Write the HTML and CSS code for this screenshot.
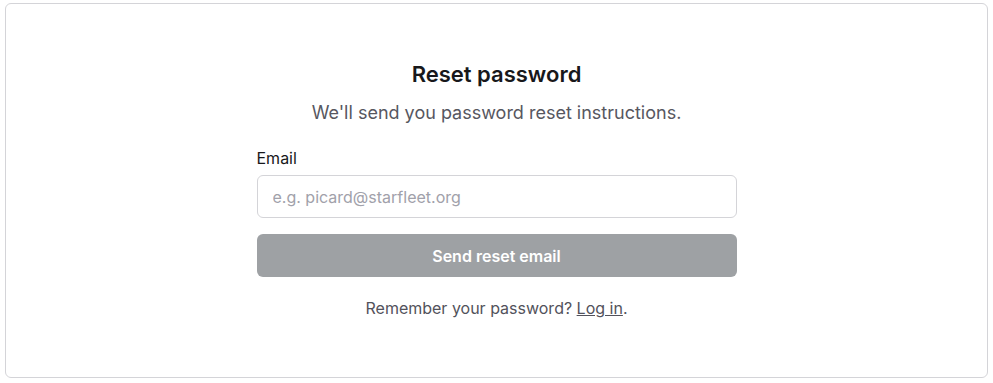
FILE: index.html
```html
<!DOCTYPE html>
<html>
<head>
  <meta charset="utf-8">
  <meta name="viewport" content="width=device-width, initial-scale=1.0">
  <title>Reset password</title>
  <link rel="stylesheet" href="styles.css">
</head>
<body>
  <main class="card">
    <form class="reset-form">
      <h1 class="title">Reset password</h1>
      <p class="subtitle">We'll send you password reset instructions.</p>
      <label class="label" for="email">Email</label>
      <input id="email" class="input" type="email" placeholder="e.g. picard@starfleet.org">
      <button class="button" type="button" disabled>Send reset email</button>
      <p class="footer">Remember your password? <a href="#">Log in</a>.</p>
    </form>
  </main>
</body>
</html>
```

FILE: styles.css
```css
body, html {
  margin: 0;
  padding: 0;
  background: #fff;
  color: #18181b;
  font-family: Inter, "Noto Sans", sans-serif;
}
/* outer bordered box */
.card {
  box-sizing: border-box;
  width: 983px;
  height: 375px;
  margin: 3px 0 0 5px;
  border: 1px solid #d4d4d8;
  border-radius: 6px;
  padding-top: 56px;
  display: flex;
  justify-content: center;
}
.reset-form {
  width: 480px;
  display: flex;
  flex-direction: column;
}
.title {
  margin: 0;
  text-align: center;
  font-size: 22px;
  line-height: 28px;
  font-weight: 600;
  color: #18181b;
}
.subtitle {
  margin: 11px 0 0;
  text-align: center;
  font-size: 18px;
  line-height: 28px;
  color: #57575f;
}
.label {
  margin-top: 19px;
  font-size: 16px;
  line-height: 24px;
  color: #18181b;
}
.input {
  box-sizing: border-box;
  margin-top: 5px;
  height: 43px;
  padding: 0 15px;
  border: 1px solid #d4d4d8;
  border-radius: 6px;
  font-family: inherit;
  font-size: 16px;
  color: #18181b;
  outline: none;
}
.input::placeholder { color: #a1a1aa; }
.button {
  margin-top: 16px;
  height: 43px;
  border: 0;
  border-radius: 6px;
  background: #9ea1a4;
  color: #fff;
  font-family: inherit;
  font-size: 16px;
  font-weight: 600;
}
.footer {
  margin: 19px 0 0;
  text-align: center;
  font-size: 16px;
  line-height: 24px;
  color: #52525b;
}
.footer a {
  color: #52525b;
  text-decoration: underline;
}
```
